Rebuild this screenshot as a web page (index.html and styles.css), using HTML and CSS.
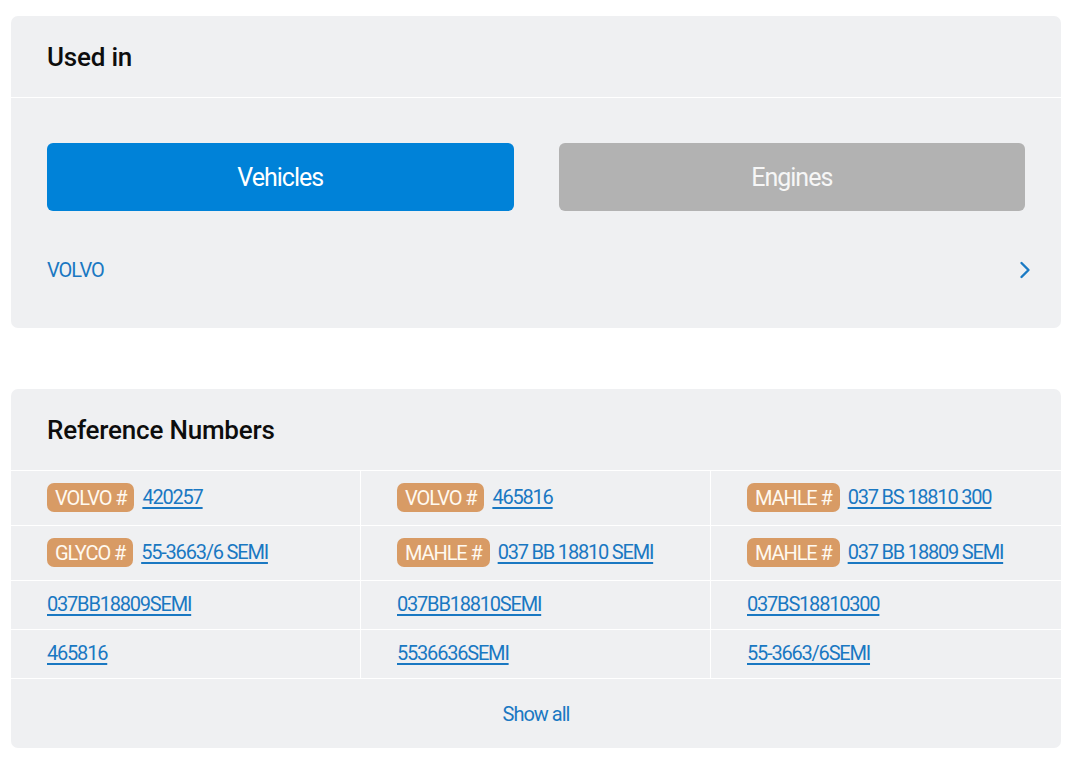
FILE: index.html
```html
<!DOCTYPE html>
<html lang="en">
<head>
<meta charset="utf-8">
<title>Used in</title>
<link rel="stylesheet" href="styles.css">
</head>
<body>
<section class="card">
  <header class="card-head"><h2>Used in</h2></header>
  <div class="used-body">
    <div class="tabs">
      <button class="tab tab-active">Vehicles</button>
      <button class="tab tab-idle">Engines</button>
    </div>
    <a class="make-row" href="#">
      <span class="make">VOLVO</span>
      <svg class="chev" width="12" height="18" viewBox="0 0 12 18"><path d="M2.5 2 L9.5 9 L2.5 16" fill="none" stroke="#1a7ac4" stroke-width="2.4" stroke-linecap="round" stroke-linejoin="round"/></svg>
    </a>
  </div>
</section>

<section class="card card-refs">
  <header class="card-head"><h2>Reference Numbers</h2></header>
  <div class="ref-grid">
    <div class="cell"><span class="badge">VOLVO #</span><a class="ref" href="#">420257</a></div>
    <div class="cell"><span class="badge">VOLVO #</span><a class="ref" href="#">465816</a></div>
    <div class="cell"><span class="badge">MAHLE #</span><a class="ref" href="#">037 BS 18810 300</a></div>
    <div class="cell"><span class="badge">GLYCO #</span><a class="ref" href="#">55-3663/6 SEMI</a></div>
    <div class="cell"><span class="badge">MAHLE #</span><a class="ref" href="#">037 BB 18810 SEMI</a></div>
    <div class="cell"><span class="badge">MAHLE #</span><a class="ref" href="#">037 BB 18809 SEMI</a></div>
    <div class="cell"><a class="ref" href="#">037BB18809SEMI</a></div>
    <div class="cell"><a class="ref" href="#">037BB18810SEMI</a></div>
    <div class="cell"><a class="ref" href="#">037BS18810300</a></div>
    <div class="cell"><a class="ref" href="#">465816</a></div>
    <div class="cell"><a class="ref" href="#">5536636SEMI</a></div>
    <div class="cell"><a class="ref" href="#">55-3663/6SEMI</a></div>
  </div>
  <div class="show-all"><a href="#">Show all</a></div>
</section>
</body>
</html>
```

FILE: styles.css
```css
body {
  margin: 16px 17px 0 11px;
  background: #ffffff;
  font-family: Roboto, "Liberation Sans", sans-serif;
  color: #111;
}

.card {
  background: #eff0f2;
  border-radius: 7px;
  overflow: hidden;
}

.card-refs {
  margin-top: 61px;
}

.card-head {
  height: 81px;
  display: flex;
  align-items: center;
  padding: 0 36px;
  border-bottom: 1px solid #ffffff;
}

.card-head h2 {
  margin: 0;
  font-size: 26px;
  font-weight: 500;
  letter-spacing: -0.2px;
  color: #0d0d0d;
}

.used-body {
  padding: 45px 36px 0 36px;
  height: 185px;
}

.tabs {
  display: flex;
  gap: 45px;
}

.tab {
  flex: 1;
  height: 68px;
  border: none;
  border-radius: 6px;
  font-family: inherit;
  font-size: 25px;
  letter-spacing: -1px;
  color: #ffffff;
  cursor: pointer;
}

.tab-active {
  background: #0082d8;
}

.tab-idle {
  background: #b2b2b2;
  color: #f6f6f6;
}

.make-row {
  display: flex;
  align-items: center;
  justify-content: space-between;
  margin-top: 44px;
  height: 30px;
  text-decoration: none;
  margin-right: -6px;
}

.make {
  font-size: 20px;
  letter-spacing: -1px;
  color: #1a78c2;
}

.chev {
  display: block;
}

.ref-grid {
  display: grid;
  grid-template-columns: repeat(3, minmax(0, 1fr));
}

.cell {
  display: flex;
  align-items: center;
  gap: 8px;
  padding: 12px 36px 13px 36px;
  min-height: 23px;
  white-space: nowrap;
  border-bottom: 1px solid #ffffff;
  border-right: 1px solid #ffffff;
}

.cell:nth-child(3n) {
  border-right: none;
}

.badge {
  display: inline-flex;
  align-items: center;
  height: 29px;
  padding: 0 8px;
  border-radius: 7px;
  background: #d89b65;
  color: #fff9f0;
  font-size: 20px;
  letter-spacing: -1.1px;
}

.ref {
  font-size: 20px;
  line-height: 23px;
  letter-spacing: -1.2px;
  color: #1a78c2;
  text-decoration: underline;
  text-underline-offset: 3px;
}

.show-all {
  height: 69px;
  display: flex;
  align-items: center;
  justify-content: center;
}

.show-all a {
  font-size: 20px;
  letter-spacing: -1px;
  color: #1a78c2;
  text-decoration: none;
}
```
